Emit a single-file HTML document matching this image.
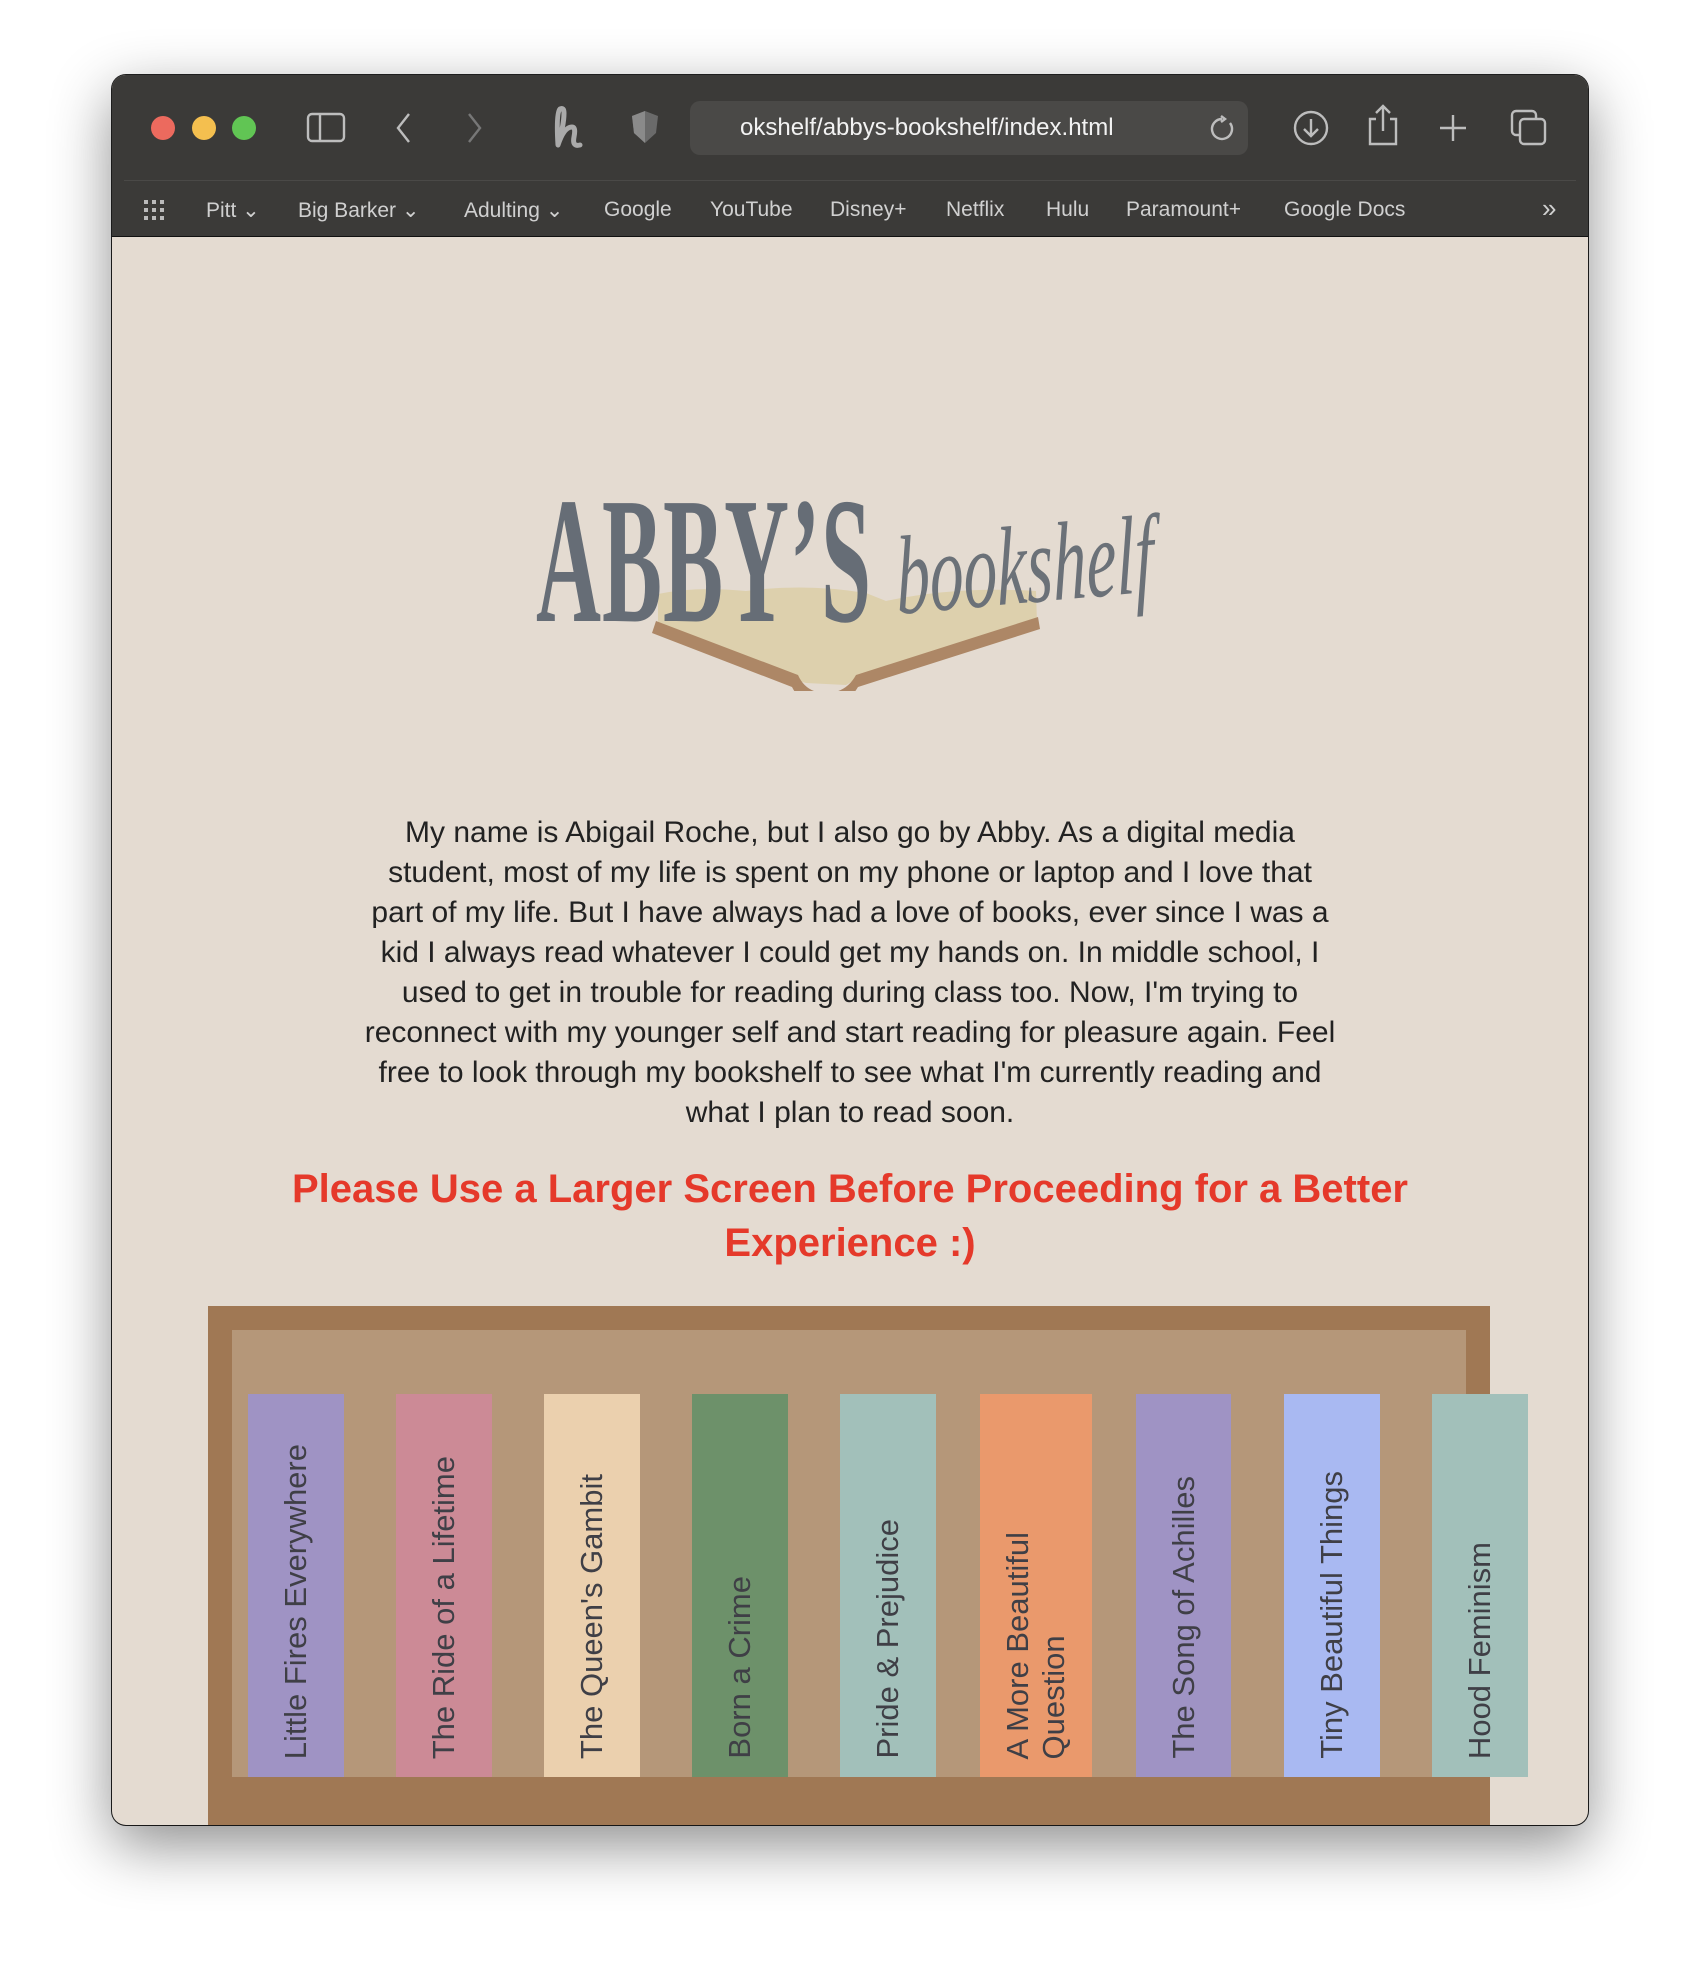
<!DOCTYPE html>
<html><head><meta charset="utf-8"><style>
*{margin:0;padding:0;box-sizing:border-box}
html,body{width:1698px;height:1974px;background:#fff;overflow:hidden;font-family:"Liberation Sans","DejaVu Sans",sans-serif}
.win{position:absolute;left:112px;top:75px;width:1476px;height:1750px;border-radius:14px;overflow:hidden;background:#e4dbd1;box-shadow:0 20px 60px rgba(0,0,0,.45),0 0 0 1px #222}
.bar{position:absolute;left:0;top:0;width:100%;height:162px;background:#3b3a38;border-bottom:1px solid #111}
.sep{position:absolute;left:12px;right:12px;top:105px;height:1px;background:#4a4947}
.dot{position:absolute;top:41px;width:24px;height:24px;border-radius:50%}
.url{position:absolute;left:578px;top:26px;width:558px;height:54px;border-radius:10px;background:#4a4947;color:#f2f2f2;font-size:24px;line-height:54px;padding-left:50px}
.bm{position:absolute;top:123px;font-size:21px;color:#d0d0d0}
.ic{position:absolute;stroke:#bdbdbd;fill:none;stroke-width:2.4}
p.t{position:absolute;left:0;width:100%;text-align:center;white-space:nowrap}
.shelf{position:absolute;left:96px;top:1231px;width:1282px;height:530px;background:#a07854}
.inner{position:absolute;left:120px;top:1255px;width:1234px;height:447px;background:#b59779}
.book{position:absolute;top:1319px;height:383px;display:flex;justify-content:center;align-items:flex-end}
.book span{writing-mode:vertical-rl;transform:rotate(180deg);font-size:31px;color:#3f3f46;line-height:36px;padding-top:18px;font-weight:300}
</style></head><body>
<div class="win">
 <div class="bar">
  <div class="sep"></div>
  <div class="dot" style="left:39px;background:#ec6a5e"></div>
  <div class="dot" style="left:80px;background:#f4bf4f"></div>
  <div class="dot" style="left:120px;background:#61c554"></div>
  <svg class="ic" style="left:194px;top:37px" width="40" height="32"><rect x="2" y="2" width="36" height="27" rx="4"/><line x1="14" y1="2" x2="14" y2="29"/></svg>
  <svg class="ic" style="left:282px;top:36px" width="20" height="34"><path d="M15 3 L4 17 L15 31"/></svg>
  <svg class="ic" style="left:352px;top:36px;stroke:#777" width="20" height="34"><path d="M5 3 L16 17 L5 31"/></svg>
  <svg style="position:absolute;left:438px;top:30px" width="34" height="46" fill="none" stroke="#aaa" stroke-width="5" stroke-linecap="round"><path d="M8 40 Q14 20 14 8 Q14 2 10 4 Q6 8 8 40 Q14 22 22 22 Q26 22 24 32 Q22 42 30 40"/></svg>
  <svg style="position:absolute;left:518px;top:34px" width="30" height="36"><path d="M15 2 L28 7 L26 24 L15 34 L4 24 L2 7Z" fill="#6a6a6a"/><path d="M15 2 L15 34 L4 24 L2 7Z" fill="#8a8a8a"/></svg>
  <div class="url">okshelf/abbys-bookshelf/index.html</div>
  <svg class="ic" style="left:1096px;top:40px" width="28" height="28"><path d="M22 8 A10 10 0 1 1 14 4"/><path d="M13 1 L17 4 L13 7"/></svg>
  <svg class="ic" style="left:1180px;top:34px" width="38" height="38"><circle cx="19" cy="19" r="16"/><path d="M19 10 V27 M12 20 L19 27 L26 20"/></svg>
  <svg class="ic" style="left:1254px;top:28px" width="34" height="44"><path d="M10 16 H4 V41 H30 V16 H24 M17 28 V3 M10 10 L17 3 L24 10"/></svg>
  <svg class="ic" style="left:1325px;top:37px" width="32" height="32"><path d="M16 3 V29 M3 16 H29"/></svg>
  <svg class="ic" style="left:1398px;top:34px" width="38" height="38"><rect x="2" y="2" width="24" height="24" rx="4"/><rect x="10" y="10" width="25" height="25" rx="4" fill="#3b3a38"/></svg>
  <svg style="position:absolute;left:32px;top:125px" width="26" height="22" fill="#bbb"><g><rect x="0" y="0" width="4" height="4"/><rect x="8" y="0" width="4" height="4"/><rect x="16" y="0" width="4" height="4"/><rect x="0" y="8" width="4" height="4"/><rect x="8" y="8" width="4" height="4"/><rect x="16" y="8" width="4" height="4"/><rect x="0" y="16" width="4" height="4"/><rect x="8" y="16" width="4" height="4"/><rect x="16" y="16" width="4" height="4"/></g></svg>
  <div class="bm" style="left:94px">Pitt ⌄</div>
  <div class="bm" style="left:186px">Big Barker ⌄</div>
  <div class="bm" style="left:352px">Adulting ⌄</div>
  <div class="bm" style="left:492px">Google</div>
  <div class="bm" style="left:598px">YouTube</div>
  <div class="bm" style="left:718px">Disney+</div>
  <div class="bm" style="left:834px">Netflix</div>
  <div class="bm" style="left:934px">Hulu</div>
  <div class="bm" style="left:1014px">Paramount+</div>
  <div class="bm" style="left:1172px">Google Docs</div>
  <div class="bm" style="left:1430px;font-size:26px;top:118px">»</div>
 </div>

 <!-- logo -->
 <svg style="position:absolute;left:394px;top:376px" width="700" height="240">
  <path d="M152 143 Q190 135 240 140 Q300 132 360 142 L380 150 Q450 135 530 140 L531 172 L350 228 L340 234 L300 232 L280 226 L152 180Z" fill="#ddd0ad"/>
  <path d="M150 170 L292 224 Q300 242 320 242 Q340 242 350 224 L532 166 L534 178 L352 236 Q340 256 320 256 Q296 256 286 236 L146 182Z" fill="#ad8766"/>
 </svg>
 <div style="position:absolute;left:424px;top:396px;font-family:'Liberation Serif',serif;font-size:180px;line-height:180px;color:#666d76;transform:scaleX(.5);transform-origin:left top;letter-spacing:2px;font-weight:bold">ABBY’S</div>
 <div style="position:absolute;left:782px;top:432px;font-family:'Liberation Serif',serif;font-style:italic;font-size:112px;line-height:140px;color:#6b7178;transform:scaleX(.6) rotate(-3deg);transform-origin:left top">bookshelf</div>

 <p class="t" style="top:738px;font-size:30px;line-height:40px;color:#222;font-weight:300">My name is Abigail Roche, but I also go by Abby. As a digital media<br>student, most of my life is spent on my phone or laptop and I love that<br>part of my life. But I have always had a love of books, ever since I was a<br>kid I always read whatever I could get my hands on. In middle school, I<br>used to get in trouble for reading during class too. Now, I'm trying to<br>reconnect with my younger self and start reading for pleasure again. Feel<br>free to look through my bookshelf to see what I'm currently reading and<br>what I plan to read soon.</p>
 <p class="t" style="top:1087px;font-size:40px;line-height:54px;color:#e5392a;font-weight:bold">Please Use a Larger Screen Before Proceeding for a Better<br>Experience :)</p>

 <div class="shelf"></div>
 <div class="inner"></div>
 <div class="book" style="left:136px;width:96px;background:#9f93c4"><span>Little Fires Everywhere</span></div>
 <div class="book" style="left:284px;width:96px;background:#cc8a96"><span>The Ride of a Lifetime</span></div>
 <div class="book" style="left:432px;width:96px;background:#ebd0ae"><span>The Queen's Gambit</span></div>
 <div class="book" style="left:580px;width:96px;background:#6d916a"><span>Born a Crime</span></div>
 <div class="book" style="left:728px;width:96px;background:#a2c0ba"><span>Pride &amp; Prejudice</span></div>
 <div class="book" style="left:868px;width:112px;background:#ea996c"><span>A More Beautiful<br>Question</span></div>
 <div class="book" style="left:1024px;width:95px;background:#9f93c4"><span>The Song of Achilles</span></div>
 <div class="book" style="left:1172px;width:96px;background:#a9b9f2"><span>Tiny Beautiful Things</span></div>
 <div class="book" style="left:1320px;width:96px;background:#a2c0ba"><span>Hood Feminism</span></div>
</div>
</body></html>
